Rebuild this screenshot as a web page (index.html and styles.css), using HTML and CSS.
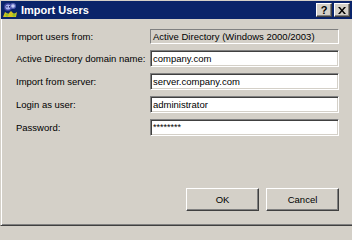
FILE: index.html
```html
<!DOCTYPE html>
<html>
<head>
<meta charset="utf-8">
<link rel="stylesheet" href="styles.css">
</head>
<body>
<div class="window">
  <div class="titlebar">
    <svg class="app-icon" width="16" height="16" viewBox="0 0 16 16">
      <circle cx="6" cy="5" r="4" fill="#3a3f9a"/>
      <circle cx="6" cy="5" r="2.6" fill="#a9b4f0"/>
      <rect x="4.5" y="4" width="1" height="1.5" fill="#1a1a5a"/>
      <rect x="7" y="4" width="1" height="1.5" fill="#1a1a5a"/>
      <circle cx="11" cy="4" r="3" fill="#5b63b8"/>
      <circle cx="11" cy="4" r="1.8" fill="#c8cff5"/>
      <path d="M1 15 L3 10 L6 12 L9 9 L12 12 L15 10 L14 15 Z" fill="#d6c21e"/>
      <path d="M3 13 L5 11 L7 13 L5 15 Z" fill="#8fbf2a"/>
      <path d="M10 13 L12 11 L14 13 L12 15 Z" fill="#8fbf2a"/>
    </svg>
    <span class="title-text">Import Users</span>
    <span class="title-spacer"></span>
    <span class="cap-btn help">?</span>
    <span class="cap-btn close">
      <svg width="8" height="7" viewBox="0 0 8 7">
        <path d="M0 0 L2 0 L4 2.5 L6 0 L8 0 L5 3.5 L8 7 L6 7 L4 4.5 L2 7 L0 7 L3 3.5 Z" fill="#000"/>
      </svg>
    </span>
  </div>
  <div class="content">
    <div class="form">
      <div class="label short">Import users from:</div>
      <div class="field readonly">Active Directory (Windows 2000/2003)</div>
      <div class="label">Active Directory domain name:</div>
      <div class="field">company.com</div>
      <div class="label">Import from server:</div>
      <div class="field">server.company.com</div>
      <div class="label">Login as user:</div>
      <div class="field">administrator</div>
      <div class="label">Password:</div>
      <div class="field password">********</div>
    </div>
    <div class="spacer"></div>
    <div class="buttons">
      <div class="btn">OK</div>
      <div class="btn">Cancel</div>
    </div>
  </div>
</div>
</body>
</html>
```
FILE: styles.css
```css
html, body {
  margin: 0;
  padding: 0;
}
body {
  width: 352px;
  height: 226px;
  overflow: hidden;
  background: #d4d0c8;
  font-family: "Liberation Sans", Arial, sans-serif;
  font-size: 9.5px;
  color: #000;
}
.window {
  box-sizing: border-box;
  width: 352px;
  height: 226px;
  display: flex;
  flex-direction: column;
  border-top: 1px solid #d4d0c8;
  border-left: 1px solid #d4d0c8;
  border-bottom: 1px solid #404040;
  box-shadow: inset 0 -1px 0 #808080;
}
.titlebar {
  height: 18px;
  background: #0a246a;
  display: flex;
  align-items: center;
  padding-left: 1px;
  flex-shrink: 0;
}
.app-icon {
  flex-shrink: 0;
}
.title-text {
  color: #fff;
  font-weight: bold;
  font-size: 11px;
  margin-left: 3px;
}
.title-spacer {
  flex: 1;
}
.cap-btn {
  box-sizing: border-box;
  width: 16px;
  height: 14px;
  background: #d4d0c8;
  border: 1px solid;
  border-color: #fff #404040 #404040 #fff;
  box-shadow: inset -1px -1px 0 #808080;
  display: flex;
  align-items: center;
  justify-content: center;
  font-weight: bold;
  font-size: 11px;
  line-height: 1;
}
.help {
  margin-right: 2px;
}
.close {
  margin-right: 2px;
}
.content {
  flex: 1;
  display: flex;
  flex-direction: column;
  border-left: 1px solid #fff;
  padding: 10px 13px 14px 14px;
}
.form {
  display: grid;
  grid-template-columns: 134px 189px;
  grid-template-rows: 15px repeat(4, 17px);
  row-gap: 6px;
}
.label {
  display: flex;
  align-items: center;
  white-space: nowrap;
}
.field {
  box-sizing: border-box;
  height: 17px;
  background: #fff;
  border: 1px solid;
  border-color: #808080 #fff #fff #808080;
  box-shadow: inset 1px 1px 0 #404040, inset -1px -1px 0 #d4d0c8;
  padding-left: 2px;
  display: flex;
  align-items: center;
  white-space: nowrap;
  overflow: hidden;
}
.field.readonly {
  height: 15px;
  background: #d4d0c8;
  box-shadow: none;
}
.field.password {
  align-items: flex-start;
  padding-top: 2px;
  font-size: 9px;
}
.spacer {
  flex: 1;
}
.buttons {
  display: flex;
  justify-content: flex-end;
  gap: 7px;
}
.btn {
  box-sizing: border-box;
  width: 73px;
  height: 23px;
  border: 1px solid;
  border-color: #fff #404040 #404040 #fff;
  box-shadow: inset -1px -1px 0 #808080;
  display: flex;
  align-items: center;
  justify-content: center;
}
```
